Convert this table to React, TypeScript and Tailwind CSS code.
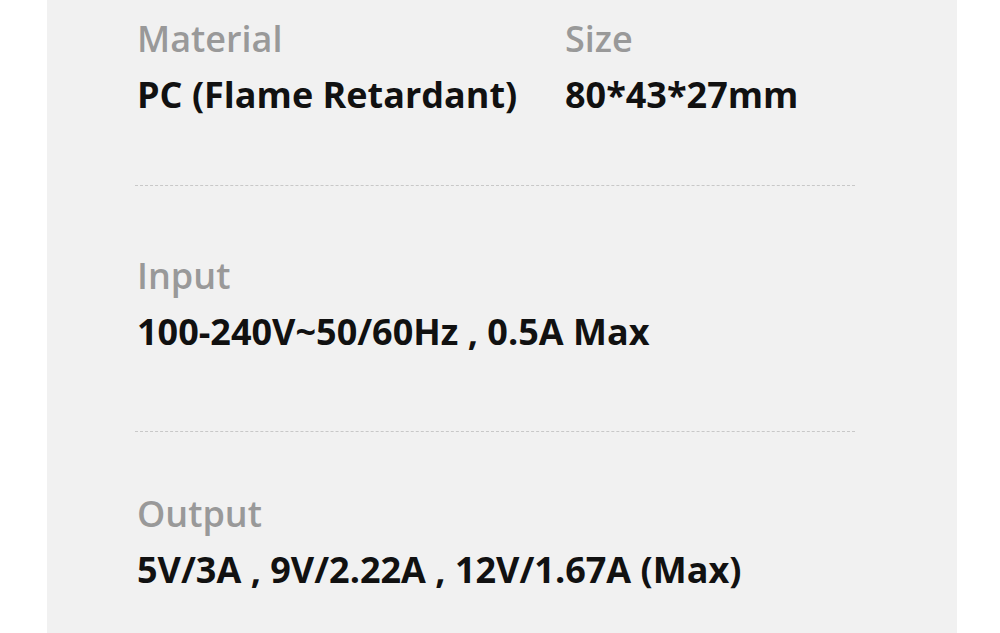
import React from "react";

const Spec: React.FC<{ label: string; value: string }> = ({ label, value }) => (
  <div className="flex flex-col gap-[12px]">
    <div className="text-[36px] leading-[44px] font-semibold text-[#999999]">{label}</div>
    <div className="text-[36px] leading-[44px] font-bold text-[#111111]">{value}</div>
  </div>
);

const Divider = () => <div className="-ml-[2px] w-[720px] border-t border-dashed border-[#c8c8c8]" />;

export default function App() {
  return (
    <div className="w-[1000px] h-[633px] bg-white overflow-hidden" style={{ fontFamily: '"Open Sans", "Liberation Sans", sans-serif' }}>
      <div className="ml-[47px] w-[910px] h-full bg-[#f1f1f1] pl-[90px] pt-[17px]">
        <div className="flex">
          <div className="w-[428px]">
            <Spec label="Material" value="PC (Flame Retardant)" />
          </div>
          <Spec label="Size" value="80*43*27mm" />
        </div>
        <div className="mt-[68px] mb-[68px]">
          <Divider />
        </div>
        <Spec label="Input" value="100-240V~50/60Hz , 0.5A Max" />
        <div className="mt-[77px] mb-[60px]">
          <Divider />
        </div>
        <Spec label="Output" value="5V/3A , 9V/2.22A , 12V/1.67A (Max)" />
      </div>
    </div>
  );
}
